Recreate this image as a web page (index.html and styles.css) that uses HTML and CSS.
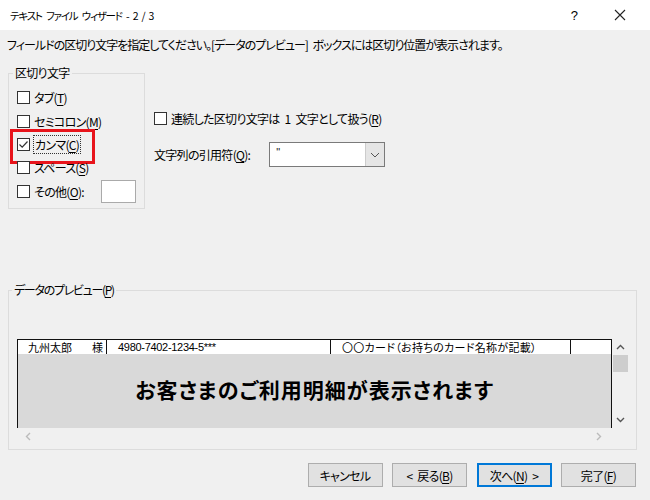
FILE: index.html
```html
<!DOCTYPE html>
<html lang="ja">
<head>
<meta charset="utf-8">
<link rel="stylesheet" href="styles.css">
</head>
<body>
<div class="window">
  <div class="titlebar">
    <span class="title">テキスト ファイル ウィザード - 2 / 3</span>
    <span class="tb-btns"><span class="help">?</span><svg class="close" width="12" height="12" viewBox="0 0 12 12"><path d="M1 1L11 11M11 1L1 11" stroke="#222" stroke-width="1.1"/></svg></span>
  </div>
  <div class="content">
    <div class="instr">フィールドの区切り文字を指定してください。[データのプレビュー] ボックスには区切り位置が表示されます。</div>
    <div class="top">
      <div class="group delims">
        <div class="glabel">区切り文字</div>
        <div class="cb-list">
          <div class="cb-row"><span class="box"></span><span>タブ(<u>T</u>)</span></div>
          <div class="cb-row"><span class="box"></span><span>セミコロン(<u>M</u>)</span></div>
          <div class="cb-row comma"><span class="box"><svg width="11" height="11" viewBox="0 0 11 11"><path d="M1.5 5.5L4.2 8.2L9.5 2.5" fill="none" stroke="#333" stroke-width="1.2"/></svg></span><span class="focus">カンマ(<u>C</u>)</span></div>
          <div class="cb-row"><span class="box"></span><span>スペース(<u>S</u>)</span></div>
          <div class="cb-row"><span class="box"></span><span>その他(<u>O</u>):</span><span class="other-input"></span></div>
        </div>
      </div>
      <div class="opts">
        <div class="cb-row"><span class="box"></span><span>連続した区切り文字は 1 文字として扱う(<u>R</u>)</span></div>
        <div class="quote-row">
          <span>文字列の引用符(<u>Q</u>):</span>
          <span class="combo"><span class="combo-val">"</span><span class="combo-btn"><svg width="10" height="6" viewBox="0 0 10 6"><path d="M1 1L5 5L9 1" fill="none" stroke="#555" stroke-width="1"/></svg></span></span>
        </div>
      </div>
    </div>
    <div class="group preview">
      <div class="glabel pvlabel">データのプレビュー(<u>P</u>)</div>
      <div class="pv-area">
        <div class="pv-table">
          <div class="pv-row">
            <span class="c1"><span>九州太郎</span><span>様</span></span>
            <span class="c2">4980-7402-1234-5***</span>
            <span class="c3">〇〇カード（お持ちのカード名称が記載）</span>
            <span class="c4"></span>
          </div>
          <div class="pv-mask">お客さまのご利用明細が表示されます</div>
        </div>
        <div class="vscroll">
          <svg width="9" height="6" viewBox="0 0 9 6"><path d="M1 5L4.5 1.5L8 5" fill="none" stroke="#555" stroke-width="1.4"/></svg>
          <span class="thumb"></span>
          <span class="vspace"></span>
          <svg width="9" height="6" viewBox="0 0 9 6"><path d="M1 1L4.5 4.5L8 1" fill="none" stroke="#555" stroke-width="1.4"/></svg>
        </div>
      </div>
      <div class="hscroll">
        <svg width="6" height="9" viewBox="0 0 6 9"><path d="M5 1L1.5 4.5L5 8" fill="none" stroke="#bbb" stroke-width="1.4"/></svg>
        <svg width="6" height="9" viewBox="0 0 6 9"><path d="M1 1L4.5 4.5L1 8" fill="none" stroke="#bbb" stroke-width="1.4"/></svg>
      </div>
    </div>
    <div class="buttons">
      <span class="btn">キャンセル</span>
      <span class="btn">&lt; 戻る(<u>B</u>)</span>
      <span class="btn default">次へ(<u>N</u>) &gt;</span>
      <span class="btn">完了(<u>F</u>)</span>
    </div>
  </div>
</div>
</body>
</html>
```
FILE: styles.css
```css
* { box-sizing: border-box; }
html, body { margin: 0; padding: 0; }
body {
  width: 650px; height: 500px; overflow: hidden;
  background: #f0f0f0;
  font-family: "Noto Sans CJK JP", "Noto Sans", sans-serif;
  font-size: 12px;
  letter-spacing: -0.7px;
  word-spacing: 3px;
  color: #000;
  font-feature-settings: "palt";
}
u { text-decoration: underline; text-underline-offset: 2px; }
.window { width: 650px; height: 500px; }
.titlebar {
  height: 30px; background: #fff;
  display: flex; align-items: center; justify-content: space-between;
  padding: 0 24px 0 10px;
}
.title { font-size: 10.5px; letter-spacing: -1.2px; word-spacing: 3px; }
.tb-btns { display: flex; align-items: center; gap: 36px; }
.help { font-size: 13px; font-family: "Liberation Sans", sans-serif; letter-spacing: 0; }
.content { padding: 0 13px 0 8px; }
.instr { height: 30px; line-height: 30px; margin-left: -1px; white-space: nowrap; letter-spacing: -1px; }
.top { display: flex; height: 230px; }
.group { border: 1px solid #dcdcdc; }
.glabel {
  width: fit-content; margin: -9px 0 0 4px; padding: 0 2px;
  line-height: 16px; height: 16px; background: #f0f0f0; white-space: nowrap;
}
.delims { width: 137px; height: 136px; margin-top: 13px; }
.cb-list { padding: 5px 0 0 8px; }
.cb-row { display: flex; align-items: center; height: 23.4px; gap: 4px; position: relative; white-space: nowrap; }
.box {
  width: 13px; height: 13px; border: 1px solid #333; background: #fff;
  display: inline-flex; align-items: center; justify-content: center; flex: none;
}
.box svg { display: block; }
.comma::after {
  content: ""; position: absolute; left: -7px; top: -4px;
  width: 79px; height: 29px; border: 3px solid #e8141b;
}
.focus { outline: 1px dotted #333; outline-offset: 0; padding: 0 1px; }
.other-input {
  width: 35px; height: 23px; background: #fff; border: 1px solid #aaa;
  margin-left: 13px; flex: none;
}
.opts { margin-left: 9px; padding-top: 48px; }
.opts .cb-row { height: 20px; }
.quote-row { display: flex; align-items: center; margin-top: 14px; gap: 19px; }
.combo {
  width: 116px; height: 25px; border: 1px solid #7a7a7a; background: #fff;
  display: flex;
}
.combo-val { flex: 1; padding-left: 6px; line-height: 18px; font-size: 11px; font-family: "Liberation Sans", sans-serif; color: #222; }
.combo-btn {
  width: 19px; border-left: 1px solid #ccc; background: #e5e5e5;
  display: flex; align-items: center; justify-content: center;
}
.preview { width: 629px; height: 160px; padding-left: 0; }
.preview .glabel { margin-left: 3px; }
.pvlabel { letter-spacing: -1.3px; }
.pv-area { display: flex; margin: 41px 0 0 8px; }
.pv-table {
  width: 595px; height: 89px; border: 1px solid #111; border-bottom: none;
  background: #fff; display: flex; flex-direction: column;
}
.pv-row { display: flex; height: 14px; font-size: 11px; line-height: 14px; letter-spacing: 0; word-spacing: 0; }
.pv-row > span { border-right: 1px solid #111; white-space: nowrap; overflow: hidden; }
.c1 { width: 89px; display: flex; justify-content: space-between; padding: 0 3px 0 10px; }
.c2 { width: 224px; padding-left: 11px; font-family: "Liberation Sans", sans-serif; letter-spacing: -0.3px; }
.c3 { width: 240px; padding-left: 11px; letter-spacing: 0.3px; }
.c4 { flex: 1; border-right: none !important; }
.pv-mask {
  flex: 1; background: #d9d9d9;
  display: flex; align-items: center; justify-content: center;
  font-size: 21px; font-weight: bold; letter-spacing: 1px; word-spacing: 0;
  padding-bottom: 4px;
}
.vscroll { width: 17px; height: 89px; display: flex; flex-direction: column; align-items: center; padding-top: 5px; }
.thumb { width: 15px; height: 17px; background: #cdcdcd; margin-top: 5px; }
.vspace { flex: 1; }
.vscroll svg:last-child { margin-bottom: 5px; }
.hscroll { width: 603px; display: flex; justify-content: space-between; padding: 4px 10px 0 16px; }
.buttons { display: flex; justify-content: flex-end; gap: 9.5px; margin-top: 13px; margin-right: 1px; }
.btn {
  width: 75px; height: 24px; border: 1px solid #adadad; background: #e1e1e1;
  display: flex; align-items: center; justify-content: center; white-space: nowrap;
}
.btn.default { border: 2px solid #0078d7; }
```
